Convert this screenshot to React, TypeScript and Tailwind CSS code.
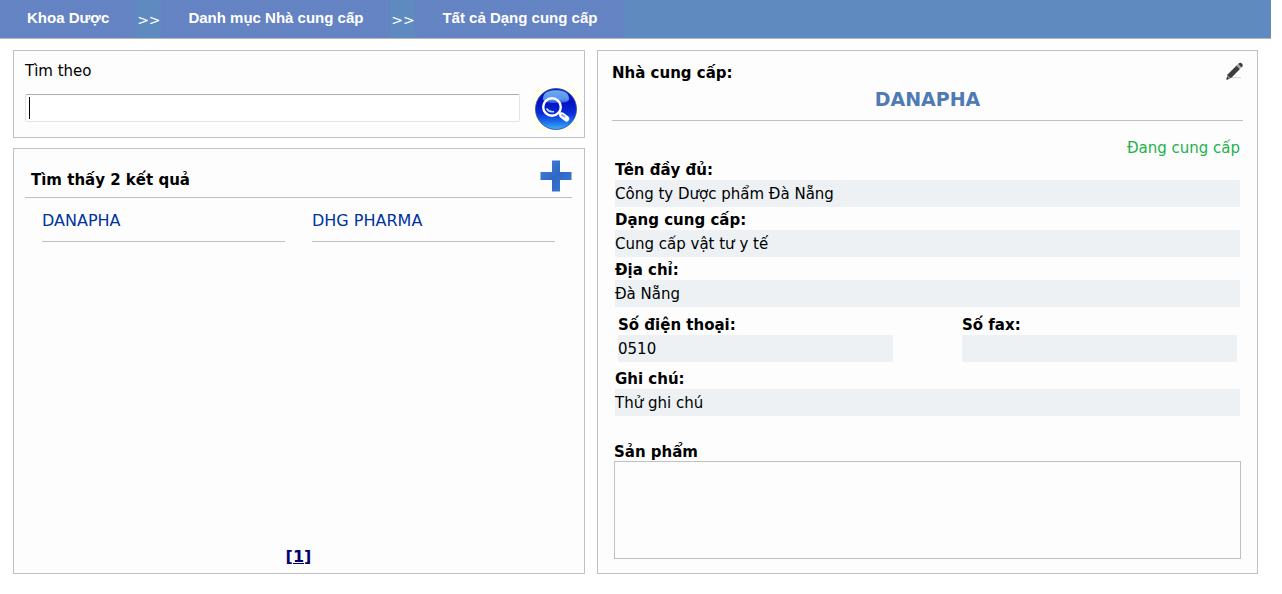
import React from "react";

const crumbs = ["Khoa Dược", "Danh mục Nhà cung cấp", "Tất cả Dạng cung cấp"];
const suppliers = ["DANAPHA", "DHG PHARMA"];

function SearchIcon() {
  return (
    <svg viewBox="0 -2 46 46" className="h-[46px] w-[46px]" aria-hidden="true">
      <defs>
        <linearGradient id="orb" x1="0" y1="0" x2="0" y2="1">
          <stop offset="0" stopColor="#0a22b4" />
          <stop offset="0.35" stopColor="#0410c4" />
          <stop offset="0.6" stopColor="#0a2cd8" />
          <stop offset="0.82" stopColor="#1a70ec" />
          <stop offset="1" stopColor="#44b0f6" />
        </linearGradient>
        <linearGradient id="gloss" x1="0" y1="0" x2="0" y2="1">
          <stop offset="0" stopColor="#6cacf0" />
          <stop offset="0.7" stopColor="#5c94ee" />
          <stop offset="1" stopColor="#2a54dc" />
        </linearGradient>
      </defs>
      <rect width="46" height="44" fill="#fffdf0" />
      <circle cx="23" cy="22" r="20.5" fill="url(#orb)" stroke="#2448a8" strokeWidth="0.8" />
      <path
        d="M10 12C10 5 16 3.2 23 3.2S36 5 36 12C36 15 31 16 23 16S10 15 10 12Z"
        fill="url(#gloss)"
      />
      <circle cx="19" cy="20" r="8.8" fill="none" stroke="#fff" strokeWidth="2.4" />
      <path d="M13.5 21.5Q16 25.5 21 24.5" fill="none" stroke="#c4d8ff" strokeWidth="1.5" />
      <path d="M25 25L28.5 27.5" stroke="#fff" strokeWidth="2.6" />
      <path d="M29 28.2L33.5 31.8" stroke="#fff" strokeWidth="5.6" strokeLinecap="round" />
      <path d="M28.5 27.5L32 30" stroke="#86aaf4" strokeWidth="1.8" />
    </svg>
  );
}

function PlusIcon() {
  return (
    <svg viewBox="0 0 32 32" className="h-8 w-8" aria-hidden="true">
      <defs>
        <linearGradient id="plus" x1="0" y1="0" x2="1" y2="1">
          <stop offset="0" stopColor="#4684da" />
          <stop offset="0.5" stopColor="#2f68c4" />
          <stop offset="1" stopColor="#3c7cd6" />
        </linearGradient>
      </defs>
      <path d="M12 0.5H20V12H31.5V20H20V31.5H12V20H0.5V12H12Z" fill="url(#plus)" />
    </svg>
  );
}

function PencilIcon() {
  return (
    <svg viewBox="0 0 18 18" className="h-[18px] w-[18px]" aria-hidden="true">
      <path d="M6 15.6H16" stroke="#dcd8dc" strokeWidth="1.2" />
      <path d="M1.6 17.6L2.8 12.2L11.6 3.4L15 6.9L6.4 15.8Z" fill="#3d3d3d" />
      <path d="M2.6 13.4L5.6 15.9L3.4 16.7L2.2 15.6Z" fill="#8c8c8c" />
      <path d="M1.4 17.8L2 15L4 16.9Z" fill="#222" />
      <path d="M11.4 3.6L12.8 2.2L16.2 5.7L14.8 7.1Z" fill="#a0a0a0" />
      <path d="M13 2L14.4 0.9Q15.4 0.3 16.4 1.1L17.4 2.2Q18.2 3.3 17.4 4.5L16.4 5.5Z" fill="#3d3d3d" />
    </svg>
  );
}

function Field({ label, value }: { label: string; value: string }) {
  return (
    <div className="pb-px">
      <dt className="h-[22px] font-bold leading-[25px]">{label}</dt>
      <dd className="h-[27px] bg-[#edf1f4] leading-[29px]">{value}</dd>
    </div>
  );
}

export default function App() {
  return (
    <div className="bg-white pr-[11px] font-['DejaVu_Sans',Verdana,sans-serif] text-[15px] text-black">
      <nav
        aria-label="Breadcrumb"
        className="flex h-[39px] border-b border-[#b8b8b8] bg-[#5f8abf] text-white"
      >
        {crumbs.map((crumb, i) => (
          <React.Fragment key={crumb}>
            {i > 0 && (
              <span className="w-[25px] text-center text-[14px] leading-[40px]">&gt;&gt;</span>
            )}
            <a
              href="#"
              className="bg-[#6681c4] bg-[radial-gradient(circle,#5f8abf_1px,transparent_1px)] bg-size-[4px_4px] px-[27px] font-['Liberation_Sans',Arial,sans-serif] font-bold leading-[36px]"
            >
              {crumb}
            </a>
          </React.Fragment>
        ))}
      </nav>

      <main className="grid grid-cols-[572fr_661fr] gap-3 px-[13px] pt-[11px]">
        <div className="flex flex-col gap-[10px]">
          <form
            className="border border-[#c0c0c0] bg-[#fdfdfd] pb-[6px] pl-[11px] pr-[5px] pt-[9px]"
            onSubmit={(e) => e.preventDefault()}
          >
            <label htmlFor="query" className="block leading-[22px]">
              Tìm theo
            </label>
            <div className="flex items-center gap-[13px] pt-[3px]">
              <div className="relative flex flex-1">
                <input
                  id="query"
                  type="text"
                  className="peer h-7 w-full min-w-0 rounded-[2px] border border-[#e3e3eb] border-t-[#abadb3] bg-white px-[3px] outline-none"
                />
                <span className="pointer-events-none absolute left-1 top-[3px] h-[22px] w-px bg-black peer-focus:hidden" />
              </div>
              <button type="submit" aria-label="Tìm">
                <SearchIcon />
              </button>
            </div>
          </form>

          <section className="flex min-h-[426px] flex-1 flex-col border border-[#c0c0c0] bg-[#fdfdfd] pb-1 pl-[11px] pr-3 pt-[11px]">
            <div className="flex justify-between border-b border-[#c0c0c0] pb-[5px] pl-[6px]">
              <h2 className="pt-2 font-bold leading-[24px]">Tìm thấy 2 kết quả</h2>
              <button type="button" aria-label="Thêm">
                <PlusIcon />
              </button>
            </div>
            <ul className="grid grid-cols-2 gap-[27px] px-[17px]">
              {suppliers.map((name) => (
                <li key={name} className="border-b border-[#c0c0c0] pb-2 pt-[11px]">
                  <a href="#" className="block text-[16px] leading-[24px] text-[#00339c]">
                    {name}
                  </a>
                </li>
              ))}
            </ul>
            <div className="mt-auto text-center text-[16px] leading-[24px]">
              <a href="#" className="font-bold text-[#00006c] underline">
                [1]
              </a>
            </div>
          </section>
        </div>

        <section className="border border-[#c0c0c0] bg-[#fdfdfd] px-[14px] pb-[14px] pt-[11px]">
          <header className="border-b border-[#c0c0c0] pb-[7px]">
            <div className="flex items-start justify-between">
              <h2 className="font-bold leading-[22px]">Nhà cung cấp:</h2>
              <button type="button" aria-label="Sửa">
                <PencilIcon />
              </button>
            </div>
            <p className="pt-[2px] text-center text-[19px] font-bold leading-[27px] text-[#4f7ab3]">
              DANAPHA
            </p>
          </header>
          <div className="px-[3px] pt-4">
            <p className="h-[21px] text-right leading-[22px] text-[#22b14c]">Đang cung cấp</p>
            <dl>
              <Field label="Tên đầy đủ:" value="Công ty Dược phẩm Đà Nẵng" />
              <Field label="Dạng cung cấp:" value="Cung cấp vật tư y tế" />
              <Field label="Địa chỉ:" value="Đà Nẵng" />
              <div className="grid grid-cols-2 gap-[69px] px-[3px] pb-1 pt-[5px]">
                <Field label="Số điện thoại:" value="0510" />
                <Field label="Số fax:" value="" />
              </div>
              <Field label="Ghi chú:" value="Thử ghi chú" />
            </dl>
          </div>
          <div className="px-[2px] pt-[25px]">
            <h3 className="h-[19px] font-bold leading-[20px]">Sản phẩm</h3>
            <div className="h-[98px] border border-[#c0c0c0]" />
          </div>
        </section>
      </main>
    </div>
  );
}
